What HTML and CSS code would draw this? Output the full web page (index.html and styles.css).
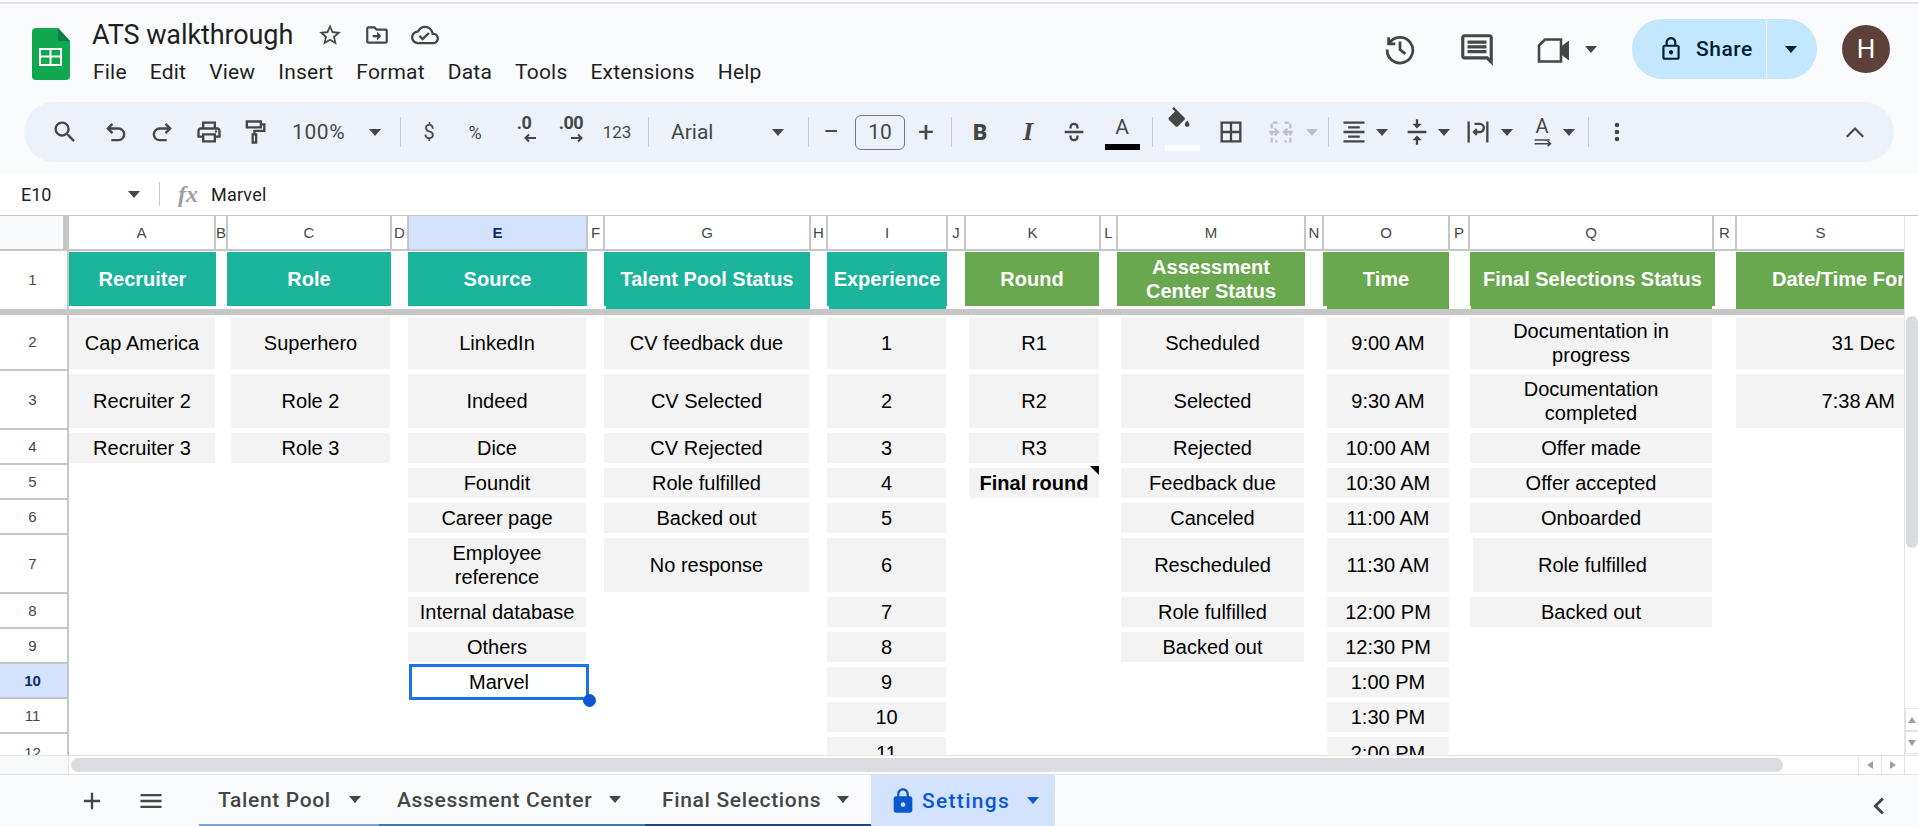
FILE: index.html
```html
<!DOCTYPE html>
<html lang="en">
<head>
<meta charset="utf-8">
<title>ATS walkthrough - Google Sheets</title>
<link rel="stylesheet" href="styles.css">
</head>
<body>
<div class="app">
  <header class="chrome">
    <div class="appbar">
      <svg class="logo" viewBox="0 0 38 52"><path fill="#11a74f" d="M4 0h22l12 13v35a4 4 0 0 1-4 4H4a4 4 0 0 1-4-4V4a4 4 0 0 1 4-4z"/><path fill="#0b8043" d="M26 0l12 13H26z"/><path fill="#fff" d="M7 20h23v18H7zm2 2v5.500h8.500V22zm10.500 0v5.500H28V22zM9 29.500V36h8.500v-6.500zm10.500 0V36H28v-6.500z" fill-rule="evenodd"/></svg>
      <div class="docinfo">
        <div class="titlerow">
          <span class="doctitle">ATS walkthrough</span>
          <svg class="ic star" viewBox="0 0 24 24"><path d="M22 9.240l-7.190-.62L12 2 9.190 8.630 2 9.240l5.460 4.730L5.820 21 12 17.270 18.180 21l-1.630-7.030L22 9.240zM12 15.400l-3.760 2.270 1-4.280-3.320-2.880 4.380-.38L12 6.100l1.710 4.040 4.380.38-3.320 2.880 1 4.280L12 15.400z"/></svg>
          <svg class="ic folder" viewBox="0 0 24 24"><path d="M20 6h-8l-2-2H4c-1.100 0-2 .9-2 2v12c0 1.100.9 2 2 2h16c1.100 0 2-.9 2-2V8c0-1.100-.9-2-2-2zm0 12H4V6h5.170l2 2H20v10zm-8-4H8v-2h4V9l4 4-4 4v-3z"/></svg>
          <svg class="ic cloud" viewBox="0 0 24 24"><path d="M19.350 10.040C18.670 6.590 15.640 4 12 4 9.110 4 6.600 5.640 5.350 8.040 2.340 8.360 0 10.910 0 14c0 3.310 2.690 6 6 6h13c2.760 0 5-2.240 5-5 0-2.640-2.050-4.780-4.650-4.960zM19 18H6c-2.210 0-4-1.790-4-4 0-2.050 1.530-3.760 3.560-3.970l1.070-.11.5-.95C8.080 7.140 9.940 6 12 6c2.620 0 4.880 1.860 5.390 4.430l.3 1.500 1.530.11c1.560.1 2.780 1.410 2.780 2.960 0 1.650-1.350 3-3 3zm-9-3.820l-2.090-2.090L6.500 13.500 10 17l6.010-6.010-1.410-1.410z"/></svg>
        </div>
        <nav class="menu"><span>File</span><span>Edit</span><span>View</span><span>Insert</span><span>Format</span><span>Data</span><span>Tools</span><span>Extensions</span><span>Help</span></nav>
      </div>
      <div class="actions">
        <svg class="act-history" viewBox="0 0 30 30"><g fill="none" stroke="#444746" stroke-width="2.600"><path d="M4.300 4v6.300h6.300"/><path d="M4.800 9.800A12 12 0 1 1 3 15.500"/><path d="M15 8v7.500l5 4"/></g></svg>
        <svg class="act-comment" viewBox="0 0 24 24"><path fill="#444746" d="M21.990 4c0-1.100-.89-2-1.990-2H4c-1.100 0-2 .9-2 2v12c0 1.100.9 2 2 2h14l4 4-.01-18zM20 4v13.170L18.830 16H4V4h16zM6 12h12v2H6zm0-3h12v2H6zm0-3h12v2H6z"/></svg>
        <svg class="act-video" viewBox="0 0 34 26"><path fill="none" stroke="#444746" stroke-width="2.600" d="M2 8l6-6h16v22H2z"/><path fill="#444746" d="M24 9l8-6v20l-8-6z"/></svg>
        <i class="caret act-caret"></i>
        <div class="share">
          <div class="share-main">
            <svg class="share-lock" viewBox="0 0 24 24"><path d="M18 8h-1V6c0-2.760-2.240-5-5-5S7 3.240 7 6v2H6c-1.100 0-2 .9-2 2v10c0 1.100.9 2 2 2h12c1.100 0 2-.9 2-2V10c0-1.100-.9-2-2-2zM9 6c0-1.660 1.340-3 3-3s3 1.340 3 3v2H9V6zm9 14H6V10h12v10zm-6-3c1.100 0 2-.9 2-2s-.9-2-2-2-2 .9-2 2 .9 2 2 2z"/></svg>
            <span>Share</span>
          </div>
          <div class="share-more"><i class="caret caret-dark"></i></div>
        </div>
        <div class="avatar">H</div>
      </div>
    </div>
    <div class="toolbar">
      <svg class="tb" viewBox="0 0 24 24"><path d="M15.500 14h-.79l-.28-.27C15.410 12.590 16 11.110 16 9.500 16 5.910 13.090 3 9.500 3S3 5.910 3 9.500 5.910 16 9.500 16c1.610 0 3.090-.59 4.230-1.570l.27.28v.79l5 4.990L20.490 19l-4.990-5zm-6 0C7.010 14 5 11.990 5 9.500S7.010 5 9.500 5 14 7.010 14 9.500 11.990 14 9.500 14z"/></svg>
      <svg class="tb m5 line" viewBox="0 0 24 24"><path d="M9 5L5 9l4 4M5 9h9a5 5 0 0 1 0 10H8"/></svg>
      <svg class="tb line" viewBox="0 0 24 24"><path d="M15 5l4 4-4 4M19 9h-9a5 5 0 0 0 0 10h6"/></svg>
      <svg class="tb m1" viewBox="0 0 24 24"><path d="M19 8h-1V3H6v5H5c-1.660 0-3 1.340-3 3v6h4v4h12v-4h4v-6c0-1.660-1.340-3-3-3zM8 5h8v3H8V5zm8 12v2H8v-4h8v2zm2-2v-2H6v2H4v-4c0-.55.45-1 1-1h14c.55 0 1 .45 1 1v4h-2z"/><circle cx="18" cy="11.500" r="1"/></svg>
      <svg class="tb line" viewBox="0 0 24 24"><path d="M5 3h12v5H5zM17 5.500h3v5.500h-8.500v3"/><path d="M10 14h3v7h-3z"/></svg>
      <span class="tb-text zoomval">100%</span>
      <i class="caret m22"></i>
      <i class="divider m20"></i>
      <span class="tb-sym m5">$</span>
      <span class="tb-sym pct">%</span>
      <span class="tb-sym m3 dec"><b>.0</b><svg class="dec-arrow" viewBox="0 0 14 10"><path d="M13 5H3M6 1.500L2.500 5 6 8.500"/></svg></span>
      <span class="tb-sym m1 dec"><b>.00</b><svg class="dec-arrow" viewBox="0 0 14 10"><path d="M1 5h10M8 1.500L11.500 5 8 8.500"/></svg></span>
      <span class="tb-sym num">123</span>
      <i class="divider m8"></i>
      <span class="tb-text fontname m22">Arial</span>
      <i class="caret"></i>
      <i class="divider m24"></i>
      <span class="tb-op m5">−</span>
      <span class="sizebox m7">10</span>
      <span class="tb-op m4">+</span>
      <i class="divider m8"></i>
      <span class="tb-sym m5 fmt-b">B</span>
      <span class="tb-sym m2 fmt-i">I</span>
      <svg class="tb line strike" viewBox="0 0 24 24"><path d="M4 12h16M9 9V8a3 3 0 0 1 6 0v1M15 15v1a3 3 0 0 1-6 0v-1"/></svg>
      <span class="tb-sym m2 fmt-a">A<i class="swatch swatch-black"></i></span>
      <i class="divider m7"></i>
      <span class="fillwrap m6"><svg class="fillicon" viewBox="0 0 24 24"><path d="M16.560 8.940L7.620 0 6.210 1.410l2.380 2.380-5.150 5.150c-.59.59-.59 1.540 0 2.120l5.500 5.500c.29.29.68.44 1.060.44s.77-.15 1.060-.44l5.500-5.500c.59-.58.59-1.530 0-2.120zM19 11.500s-2 2.170-2 3.500c0 1.100.9 2 2 2s2-.9 2-2c0-1.330-2-3.500-2-3.500z"/></svg><i class="swatch swatch-white"></i></span>
      <svg class="tb m3" viewBox="0 0 24 24"><path d="M3 3v18h18V3H3zm8 16H5v-6h6v6zm0-8H5V5h6v6zm8 8h-6v-6h6v6zm0-8h-6V5h6v6z"/></svg>
      <svg class="tb m4 line merge" viewBox="0 0 24 24"><path stroke-dasharray="4 2" d="M9 4H4v16h5M15 4h5v16h-5"/><path d="M2 12h7M6.500 9L9.500 12 6.500 15M22 12h-7M17.500 9L14.500 12l3 3"/></svg>
      <i class="caret caret-off m2"></i>
      <i class="divider m10"></i>
      <svg class="tb30 m10" viewBox="0 0 24 24"><path d="M7 15v2h10v-2H7zm-4 6h18v-2H3v2zm0-8h18v-2H3v2zm4-6v2h10V7H7zM3 3v2h18V3H3z"/></svg>
      <i class="caret m7"></i>
      <svg class="tb30 m14" viewBox="0 0 24 24"><path d="M8 19h3v4h2v-4h3l-4-4-4 4zm8-14h-3V1h-2v4H8l4 4 4-4zM4 11v2h16v-2H4z"/></svg>
      <i class="caret m6"></i>
      <svg class="tb30 m13 line" viewBox="0 0 24 24"><path d="M4 3v18M20 3v18M9 5h4.500a3.500 3.500 0 0 1 0 7H8.500M11 9.500L8.500 12l2.500 2.500"/></svg>
      <i class="caret m8"></i>
      <span class="rotate m14">A<svg class="rotate-arrow" viewBox="0 0 24 10"><path d="M2 2.500h18M2 7h19M17.500 4l3.500 3-3.500 3"/></svg></span>
      <i class="caret m6"></i>
      <i class="divider m13"></i>
      <svg class="tb30 m13" viewBox="0 0 24 24"><path d="M12 8a2 2 0 1 0 0-4 2 2 0 0 0 0 4zm0 2a2 2 0 1 0 0 4 2 2 0 0 0 0-4zm0 6a2 2 0 1 0 0 4 2 2 0 0 0 0-4z"/></svg>
      <svg class="tb30 collapse line" viewBox="0 0 24 24"><path d="M5 16l7-7 7 7"/></svg>
    </div>
  </header>

  <div class="formula">
    <span class="cellref">E10</span>
    <i class="caret cellref-caret"></i>
    <i class="formula-sep"></i>
    <span class="fx">fx</span>
    <span class="formula-val">Marvel</span>
  </div>

  <div class="sheet">
    <div class="grid">
      <div class="corner"></div>
      <div class="colh">A</div><div class="colh">B</div><div class="colh">C</div><div class="colh">D</div><div class="colh colh-sel">E</div><div class="colh">F</div><div class="colh">G</div><div class="colh">H</div><div class="colh">I</div><div class="colh">J</div><div class="colh">K</div><div class="colh">L</div><div class="colh">M</div><div class="colh">N</div><div class="colh">O</div><div class="colh">P</div><div class="colh">Q</div><div class="colh">R</div><div class="colh colh-last">S</div>

      <div class="rowh r1">1</div>
      <div class="freeze"></div>
      <div class="rowh r2">2</div>
      <div class="rowh r3">3</div>
      <div class="rowh r4">4</div>
      <div class="rowh r5">5</div>
      <div class="rowh r6">6</div>
      <div class="rowh r7">7</div>
      <div class="rowh r8">8</div>
      <div class="rowh r9">9</div>
      <div class="rowh rowh-sel r10">10</div>
      <div class="rowh r11">11</div>
      <div class="rowh r12">12</div>

      <div class="hd teal ca r1">Recruiter</div>
      <div class="hd teal cc r1">Role</div>
      <div class="hd teal ce r1">Source</div>
      <div class="hd teal cg r1 ext ext-g">Talent Pool Status</div>
      <div class="hd teal ci r1 ext ext-i">Experience</div>
      <div class="hd green ck r1">Round</div>
      <div class="hd green cm r1">Assessment<br>Center Status</div>
      <div class="hd green co r1 ext ext-o">Time</div>
      <div class="hd green cq r1 ext ext-q">Final Selections Status</div>
      <div class="hd green cs r1 ext hd-clip"><span>Date/Time Format</span></div>

      <div class="cell da r2">Cap America</div><div class="cell da r3">Recruiter 2</div><div class="cell da r4">Recruiter 3</div>
      <div class="cell dc r2">Superhero</div><div class="cell dc r3">Role 2</div><div class="cell dc r4">Role 3</div>

      <div class="cell de r2">LinkedIn</div><div class="cell de r3">Indeed</div><div class="cell de r4">Dice</div><div class="cell de r5">Foundit</div><div class="cell de r6">Career page</div><div class="cell de r7">Employee<br>reference</div><div class="cell de r8">Internal database</div><div class="cell de r9">Others</div>
      <div class="selected ce r10">Marvel<i class="handle"></i></div>

      <div class="cell dg r2">CV feedback due</div><div class="cell dg r3">CV Selected</div><div class="cell dg r4">CV Rejected</div><div class="cell dg r5">Role fulfilled</div><div class="cell dg r6">Backed out</div><div class="cell dg r7">No response</div>

      <div class="cell di r2">1</div><div class="cell di r3">2</div><div class="cell di r4">3</div><div class="cell di r5">4</div><div class="cell di r6">5</div><div class="cell di r7">6</div><div class="cell di r8">7</div><div class="cell di r9">8</div><div class="cell di r10">9</div><div class="cell di r11">10</div><div class="cell di r12 clip">11</div>

      <div class="cell dk r2">R1</div><div class="cell dk r3">R2</div><div class="cell dk r4">R3</div><div class="cell dk r5 strong">Final round<i class="note"></i></div>

      <div class="cell dm r2">Scheduled</div><div class="cell dm r3">Selected</div><div class="cell dm r4">Rejected</div><div class="cell dm r5">Feedback due</div><div class="cell dm r6">Canceled</div><div class="cell dm r7">Rescheduled</div><div class="cell dm r8">Role fulfilled</div><div class="cell dm r9">Backed out</div>

      <div class="cell do r2">9:00 AM</div><div class="cell do r3">9:30 AM</div><div class="cell do r4">10:00 AM</div><div class="cell do r5">10:30 AM</div><div class="cell do r6">11:00 AM</div><div class="cell do r7">11:30 AM</div><div class="cell do r8">12:00 PM</div><div class="cell do r9">12:30 PM</div><div class="cell do r10">1:00 PM</div><div class="cell do r11">1:30 PM</div><div class="cell do r12 clip">2:00 PM</div>

      <div class="cell dq r2">Documentation in<br>progress</div><div class="cell dq r3">Documentation<br>completed</div><div class="cell dq r4">Offer made</div><div class="cell dq r5">Offer accepted</div><div class="cell dq r6">Onboarded</div><div class="cell dq dq-inset r7">Role fulfilled</div><div class="cell dq r8">Backed out</div>

      <div class="cell ds r2">31 Dec</div><div class="cell ds r3">7:38 AM</div>
    </div>
    <div class="vscroll">
      <div class="vthumb"></div>
      <div class="varrows">
        <div class="varrow"><i class="tri tri-up"></i></div>
        <div class="varrow"><i class="tri tri-down"></i></div>
      </div>
    </div>
  </div>

  <div class="hscroll">
    <div class="hgutter"></div>
    <div class="htrack"><div class="hthumb"></div></div>
    <div class="harrow"><i class="tri tri-left"></i></div>
    <div class="harrow"><i class="tri tri-right"></i></div>
    <div class="hend"></div>
  </div>

  <footer class="tabs">
    <svg class="tabicon add" viewBox="0 0 24 24"><path d="M19 13h-6v6h-2v-6H5v-2h6V5h2v6h6v2z"/></svg>
    <svg class="tabicon all" viewBox="0 0 24 24"><path d="M3 18h18v-2H3v2zm0-5h18v-2H3v2zm0-7v2h18V6H3z"/></svg>
    <div class="tab tab-talent"><span>Talent Pool</span><i class="caret"></i></div>
    <div class="tab tab-assess"><span>Assessment Center</span><i class="caret"></i></div>
    <div class="tab tab-final"><span>Final Selections</span><i class="caret"></i></div>
    <div class="tab tab-active">
      <svg class="tab-lock" viewBox="0 0 24 24"><path d="M18 8h-1V6c0-2.760-2.240-5-5-5S7 3.240 7 6v2H6c-1.100 0-2 .9-2 2v10c0 1.100.9 2 2 2h12c1.100 0 2-.9 2-2V10c0-1.100-.9-2-2-2zm-6 9c-1.100 0-2-.9-2-2s.9-2 2-2 2 .9 2 2-.9 2-2 2zm3.100-9H8.900V6c0-1.710 1.390-3.100 3.100-3.100 1.710 0 3.100 1.390 3.100 3.100v2z"/></svg>
      <span>Settings</span><i class="caret caret-blue"></i>
    </div>
    <svg class="tabs-collapse" viewBox="0 0 24 24"><path d="M15.410 7.410L14 6l-6 6 6 6 1.410-1.410L10.830 12z"/></svg>
  </footer>
</div>
</body>
</html>
```

FILE: styles.css
```css
* { box-sizing: border-box; }
html, body { margin: 0; height: 100%; overflow: hidden; background: #fff; }
body { font-family: "Liberation Sans", Arial, sans-serif; color: #000; }
i { font-style: normal; display: block; }
.app { width: 1918px; height: 826px; display: flex; flex-direction: column; }

/* chrome */
.chrome { height: 173px; flex: none; background: #f9fbfd; border-top: 2px solid #fff; font-family: Roboto, sans-serif; color: #1f1f1f; }
.appbar { height: 100px; border-top: 2px solid #e1e3f0; display: flex; position: relative; }
.logo { width: 38px; height: 52px; margin: 24px 0 0 32px; flex: none; }
.docinfo { margin-left: 22px; padding-top: 12px; }
.titlerow { display: flex; align-items: center; height: 38px; }
.doctitle { font-size: 27px; letter-spacing: -.1px; line-height: 38px; width: 202px; white-space: nowrap; }
.ic { width: 26px; height: 26px; fill: #444746; flex: none; }
.star { margin-left: 23px; }
.folder { margin-left: 21px; }
.cloud { margin-left: 21px; width: 28px; height: 28px; }
.menu { display: flex; font-size: 21px; line-height: 30px; margin-top: 3px; letter-spacing: .2px; padding-left: 1px; }
.menu span { margin-right: 23px; white-space: nowrap; }
.actions { margin-left: auto; display: flex; align-items: center; position: relative; padding-right: 28px; height: 96px; padding-bottom: 6px; }
.act-history { width: 32px; height: 32px; margin-right: 42px; }
.act-comment { width: 38px; height: 38px; margin-right: 41px; margin-top: 2px; }
.act-video { width: 34px; height: 27px; margin-right: 14px; margin-top: 2px; }
.act-caret { margin-right: 35px; }
.caret { width: 0; height: 0; flex: none; border-left: 6px solid transparent; border-right: 6px solid transparent; border-top: 7px solid #444746; }
.caret-dark { border-top-color: #001d35; }
.caret-off { border-top-color: #bdc1c6; }
.caret-blue { border-top-color: #0b57d0; }
.share { display: flex; width: 185px; height: 60px; border-radius: 30px; background: #c2e7ff; color: #001d35; overflow: hidden; margin-right: 25px; }
.share-main { width: 135px; display: flex; align-items: center; padding-left: 26px; border-right: 1px solid #f1f8ff; font-size: 21px; font-weight: 500; letter-spacing: .5px; }
.share-lock { width: 26px; height: 30px; fill: #001d35; margin-right: 12px; flex: none; }
.share-more { flex: 1; display: flex; align-items: center; justify-content: center; padding-right: 2px; }
.avatar { width: 48px; height: 48px; border-radius: 50%; background: #5d4037; color: #fff; font-size: 26px; display: flex; align-items: center; justify-content: center; }

/* toolbar */
.toolbar { height: 60px; margin: 0 24px; border-radius: 30px; background: #edf2fa; display: flex; align-items: center; padding: 0 24px 0 18px; }
.tb { width: 46px; height: 28px; flex: none; fill: #444746; }
.tb30 { width: 30px; height: 28px; flex: none; fill: #444746; }
.line { fill: none; stroke: #444746; stroke-width: 2; }
.merge { stroke: #bdc1c6; }
.collapse { margin-left: auto; stroke-width: 1.800; }
.tb-text { font-size: 21px; color: #444746; flex: none; }
.zoomval { margin-left: 14px; width: 55px; letter-spacing: .6px; }
.fontname { width: 101px; }
.divider { width: 1px; height: 30px; background: #c7c7c7; flex: none; }
.tb-sym { width: 46px; text-align: center; color: #444746; font-size: 20px; flex: none; position: relative; }
.pct { font-size: 18px; }
.num { font-size: 17px; }
.dec { font-size: 20px; height: 34px; line-height: 24px; }
.dec b { font-weight: 700; letter-spacing: -.5px; display: block; font-size: 18px; margin-top: -4px; }
.dec-arrow { width: 14px; height: 10px; display: block; margin: -2px auto 0 auto; fill: none; stroke: #444746; stroke-width: 2; transform: translateX(6px); }
.tb-op { width: 34px; text-align: center; font-size: 28px; line-height: 30px; color: #444746; flex: none; }
.sizebox { width: 50px; height: 35px; border: 1px solid #747775; border-radius: 6px; text-align: center; font-size: 21px; line-height: 33px; color: #444746; flex: none; }
.fmt-b { font-weight: 900; font-size: 22px; }
.fmt-i { font-family: "Liberation Serif", serif; font-weight: 700; font-style: italic; font-size: 26px; }
.fmt-a { font-size: 21px; height: 36px; line-height: 26px; }
.swatch { position: absolute; left: 6px; bottom: 0; width: 35px; height: 6px; }
.swatch-black { background: #000; }
.swatch-white { background: #fff; left: 0; }
.fillwrap { width: 46px; height: 38px; position: relative; flex: none; padding-left: 5px; }
.fillicon { width: 30px; height: 28px; fill: #444746; display: block; margin-top: -6px; }
.fillwrap .swatch-white { left: 6px; bottom: 0; }
.rotate { width: 30px; height: 36px; flex: none; font-size: 20px; text-align: center; line-height: 24px; color: #444746; position: relative; }
.rotate-arrow { position: absolute; left: 6px; top: 23px; width: 20px; height: 10px; fill: none; stroke: #444746; stroke-width: 1.800; }

.m1 { margin-left: 1px; } .m2 { margin-left: 2px; } .m3 { margin-left: 3px; } .m4 { margin-left: 4px; }
.m5 { margin-left: 5px; } .m6 { margin-left: 6px; } .m7 { margin-left: 7px; } .m8 { margin-left: 8px; }
.m10 { margin-left: 10px; } .m13 { margin-left: 13px; } .m14 { margin-left: 14px; } .m20 { margin-left: 19px; }
.m22 { margin-left: 22px; } .m24 { margin-left: 24px; }

/* formula bar */
.formula { height: 42px; flex: none; display: flex; align-items: center; font-family: Roboto, sans-serif; font-size: 18px; color: #1f1f1f; padding-left: 21px; background: #fff; }
.cellref { width: 107px; }
.cellref-caret { margin-right: 19px; }
.formula-sep { width: 1px; height: 24px; background: #c7c7c7; margin-right: 18px; }
.fx { font-family: "Liberation Serif", serif; font-style: italic; font-size: 24px; font-weight: 700; color: #9aa0a6; width: 33px; }
.formula-val { letter-spacing: .2px; }

/* sheet */
.sheet { flex: none; height: 540px; display: flex; border-top: 1px solid #c4c7c5; }
.grid {
  width: 1904px; height: 539px; overflow: hidden; flex: none; display: grid; position: relative;
  grid-template-columns: 69px 147px 12px 164px 17px 179px 17px 206px 17px 120px 18px 135px 17px 188px 18px 126px 20px 244px 23px 167px;
  grid-template-rows: 35px 58px 6px 56px 59px 35px 35px 35px 59px 35px 35px 35px 35px 35px;
  font-size: 20px; line-height: 24px; text-align: center;
}
.corner { background: #f8f9fa; border-right: 6px solid #c4c7c5; border-bottom: 2px solid #c4c7c5; }
.colh { border-right: 2px solid #c4c7c5; border-bottom: 2px solid #c4c7c5; font-size: 15px; color: #444746; display: flex; align-items: center; justify-content: center; overflow: hidden; }
.colh-sel { background: #d3e3fd; color: #0b2c6b; font-weight: 700; }
.colh-last { border-right: 0; }
.rowh { grid-column: 1; border-right: 2px solid #c4c7c5; border-bottom: 2px solid #c4c7c5; font-size: 15px; color: #444746; display: flex; align-items: center; justify-content: center; padding-right: 2px; }
.rowh.r1 { border-bottom: 0; }
.rowh-sel { background: #d3e3fd; color: #0b2c6b; font-weight: 700; }
.rowh.r12 { padding-top: 4px; }
.freeze { grid-column: 1 / -1; grid-row: 3; background: #c4c7c5; }

.r1 { grid-row: 2; } .r2 { grid-row: 4; } .r3 { grid-row: 5; } .r4 { grid-row: 6; } .r5 { grid-row: 7; } .r6 { grid-row: 8; }
.r7 { grid-row: 9; } .r8 { grid-row: 10; } .r9 { grid-row: 11; } .r10 { grid-row: 12; } .r11 { grid-row: 13; } .r12 { grid-row: 14; }

.ca, .da { grid-column: 2; } .cc, .dc { grid-column: 4; } .ce, .de { grid-column: 6; } .cg, .dg { grid-column: 8; }
.ci, .di { grid-column: 10; } .ck, .dk { grid-column: 12; } .cm, .dm { grid-column: 14; } .co, .do { grid-column: 16; }
.cq, .dq { grid-column: 18; } .cs, .ds { grid-column: 20; }

.hd { margin-top: 1px; margin-bottom: 3px; color: #fff; font-weight: 700; display: flex; align-items: center; justify-content: center; position: relative; white-space: nowrap; }
.teal { background: #1ab39b; }
.green { background: #6aa84f; }
.ca { margin-right: 0; }
.cc { margin-left: -1px; margin-right: 1px; }
.ce { margin-left: -1px; margin-right: 1px; }
.cg { margin-left: -1px; margin-right: 1px; }
.ci { margin-left: -1px; margin-right: 1px; }
.ck { margin-left: -1px; margin-right: 2px; }
.cm { margin-left: -1px; margin-right: 1px; }
.co { margin-left: -1px; margin-right: 1px; }
.cq { margin-right: -1px; }
.cs { margin-left: -1px; }
.ext::after { content: ""; position: absolute; top: 100%; height: 3px; left: 0; right: 0; background: inherit; }
.ext-g::after { left: 2px; }
.ext-i::after { left: 2px; right: 1px; }
.ext-o::after { left: 4px; }
.ext-q::after { left: 1px; right: 3px; }
.hd-clip { overflow: visible; justify-content: flex-start; padding-left: 36px; }
.hd-clip span { display: block; width: 131px; overflow: hidden; }

.cell { background: #f3f3f3; margin-top: 3px; margin-bottom: 2px; display: flex; align-items: center; justify-content: center; position: relative; white-space: nowrap; }
.cell.r2 { margin-top: 2px; }
.da { margin-right: 1px; }
.dc { margin-left: 3px; margin-right: 2px; }
.de { margin-left: -1px; margin-right: 2px; }
.dg { margin-left: -1px; margin-right: 2px; }
.di { margin-left: -1px; margin-right: 2px; }
.dk { margin-left: 3px; margin-right: 2px; }
.dm { margin-left: 3px; margin-right: 2px; }
.do { margin-left: 3px; margin-right: 1px; }
.dq { margin-right: 2px; }
.dq-inset { margin-left: 3px; }
.ds { margin-left: -1px; justify-content: flex-end; padding-right: 9px; }
.strong { font-weight: 700; }
.clip { margin-bottom: 0; }
.note { position: absolute; top: -2px; right: 0; width: 0; height: 0; border-top: 9px solid #000; border-left: 9px solid transparent; }

.selected { margin: 0 -1px 0 0; border: 3px solid #1a73e8; display: flex; align-items: center; justify-content: center; position: relative; z-index: 2; margin-bottom: -1px; }
.handle { position: absolute; right: -10px; bottom: -10px; width: 13px; height: 13px; border-radius: 50%; background: #0b57d0; border: 1px solid #0b57d0; }

.vscroll { width: 14px; flex: none; display: flex; flex-direction: column; border-left: 1px solid #e3e3e3; padding-top: 100px; background: #fff; position: relative; }
.vthumb { width: 12px; height: 232px; margin-left: 1px; background: #dadce0; border-radius: 6px; }
.varrows { margin-top: auto; margin-bottom: 1px; }
.varrow { height: 23px; border: 1px solid #e3e3e3; border-right: 0; display: flex; align-items: center; justify-content: center; }
.tri { width: 0; height: 0; border: 4px solid transparent; }
.tri-up { border-top: 0; border-bottom: 6px solid #9aa0a6; }
.tri-down { border-bottom: 0; border-top: 6px solid #9aa0a6; }
.tri-left { border-left: 0; border-right: 6px solid #9aa0a6; }
.tri-right { border-right: 0; border-left: 6px solid #9aa0a6; }

.hscroll { height: 20px; flex: none; display: flex; align-items: center; border-top: 1px solid #e3e3e3; border-bottom: 1px solid #e3e3e3; background: #fff; }
.hgutter { width: 69px; height: 100%; background: #f8f9fa; border-right: 1px solid #e3e3e3; flex: none; }
.htrack { width: 1789px; height: 100%; flex: none; padding: 2px 0 2px 2px; }
.hthumb { width: 1712px; height: 14px; background: #dadce0; border-radius: 7px; }
.harrow { width: 23px; height: 100%; border-left: 1px solid #e3e3e3; display: flex; align-items: center; justify-content: center; flex: none; }
.hend { flex: 1; height: 100%; border-left: 1px solid #e3e3e3; }

/* tabs */
.tabs { flex: 1; background: #f9fbfd; display: flex; align-items: stretch; font-family: Roboto, sans-serif; font-size: 21px; font-weight: 500; color: #444746; position: relative; }
.tabicon { width: 28px; height: 28px; fill: #444746; align-self: center; flex: none; }
.add { margin-left: 78px; }
.all { margin-left: 31px; margin-right: 34px; }
.tab { display: flex; align-items: center; flex: none; letter-spacing: .65px; white-space: nowrap; }
.tab-talent { width: 180px; padding-left: 19px; border-bottom: 2px solid #7aa3d6; }
.tab-talent .caret { margin-left: 18px; }
.tab-assess { width: 266px; padding-left: 18px; border-bottom: 2px solid #3c78b8; margin-left: 0; }
.tab-assess .caret { margin-left: 17px; }
.tab-final { width: 226px; padding-left: 17px; border-bottom: 2px solid #1c4587; }
.tab-final .caret { margin-left: 16px; }
.tab-active { width: 184px; background: #d3e3fd; color: #0b57d0; padding-left: 18px; letter-spacing: 1.300px; }
.tab-lock { width: 28px; height: 34px; fill: #0b57d0; margin-right: 5px; flex: none; }
.tab-active .caret { margin-left: 17px; }
.tabs-collapse { width: 34px; height: 34px; fill: #444746; position: absolute; right: 22px; top: 14px; }
```
